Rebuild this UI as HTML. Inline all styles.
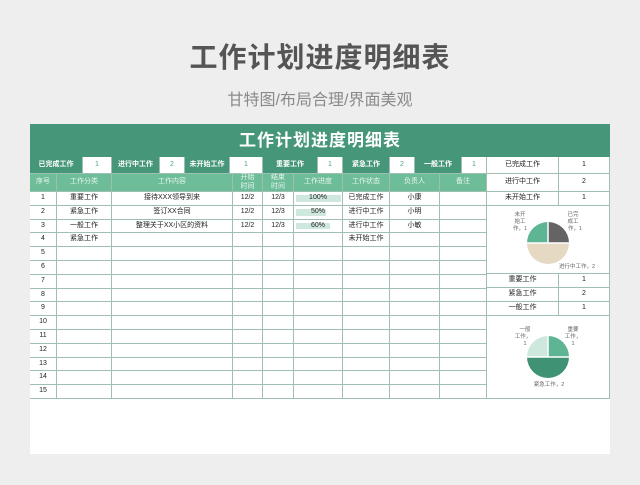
<!DOCTYPE html>
<html><head><meta charset="utf-8"><style>
*{margin:0;padding:0;box-sizing:border-box}
body{width:640px;height:485px;background:#eeeeee;font-family:"Liberation Sans","Noto Sans CJK SC",sans-serif;position:relative;overflow:hidden}
.a{position:absolute}
.h1{left:0;width:640px;top:36px;text-align:center;font-size:28px;color:#555;font-weight:bold;letter-spacing:1px}
.h2{left:0;width:640px;top:86px;text-align:center;font-size:16px;color:#8a8a8a}
.sheet{left:30px;top:124px;width:580px;height:330px;background:#fff}
.bar{left:30px;top:124px;width:580px;height:33px;background:#46977a;color:#fff;font-size:17px;font-weight:bold;text-align:center;line-height:33px;letter-spacing:1px}
.c{position:absolute;font-size:7px;text-align:center;color:#222;border-right:1px solid #9fbfb2;border-bottom:1px solid #9fbfb2;display:flex;align-items:center;justify-content:center;line-height:1.2}
.d{background:#46977a;color:#fff;font-weight:bold}
.v{color:#4fa385}
.l{background:#6dbd98;color:#e8f5ef}
.pb{position:absolute;left:2px;top:3px;bottom:3px;background:#cfe8de}
</style></head><body>
<div class="a h1">工作计划进度明细表</div>
<div class="a h2">甘特图/布局合理/界面美观</div>
<div class="a sheet"></div>
<div class="a bar">工作计划进度明细表</div>
<div id="g"></div>
<svg class="a" style="left:487px;top:206px" width="123" height="68">
<path d="M61,16 A21,21 0 0,1 82,37 L61,37Z" fill="#646464"/>
<path d="M40,37 A21,21 0 0,1 61,16 L61,37Z" fill="#5db593"/>
<path d="M40,37 A21,21 0 0,0 82,37Z" fill="#e6d9c4"/>
<line x1="40" y1="37" x2="82" y2="37" stroke="#fff" stroke-width="1.5"/>
<line x1="61" y1="16" x2="61" y2="37" stroke="#fff" stroke-width="1.5"/>
<text x="33" y="10" font-size="5.5" fill="#666" text-anchor="middle">未开</text>
<text x="33" y="17" font-size="5.5" fill="#666" text-anchor="middle">始工</text>
<text x="33" y="24" font-size="5.5" fill="#666" text-anchor="middle">作，1</text>
<text x="86" y="10" font-size="5.5" fill="#666" text-anchor="middle">已完</text>
<text x="86" y="17" font-size="5.5" fill="#666" text-anchor="middle">成工</text>
<text x="88" y="24" font-size="5.5" fill="#666" text-anchor="middle">作，1</text>
<text x="90" y="62" font-size="5.5" fill="#666" text-anchor="middle">进行中工作，2</text>
</svg>
<svg class="a" style="left:487px;top:316px" width="123" height="83">
<path d="M61,20 A21,21 0 0,1 82,41 L61,41Z" fill="#5db593"/>
<path d="M40,41 A21,21 0 0,1 61,20 L61,41Z" fill="#cfe8de"/>
<path d="M40,41 A21,21 0 0,0 82,41Z" fill="#3f9274"/>
<line x1="40" y1="41" x2="82" y2="41" stroke="#fff" stroke-width="1.5"/>
<line x1="61" y1="20" x2="61" y2="41" stroke="#fff" stroke-width="1.5"/>
<text x="38" y="15" font-size="5.5" fill="#666" text-anchor="middle">一般</text>
<text x="36" y="22" font-size="5.5" fill="#666" text-anchor="middle">工作，</text>
<text x="38" y="29" font-size="5.5" fill="#666" text-anchor="middle">1</text>
<text x="86" y="15" font-size="5.5" fill="#666" text-anchor="middle">重要</text>
<text x="86" y="22" font-size="5.5" fill="#666" text-anchor="middle">工作，</text>
<text x="86" y="29" font-size="5.5" fill="#666" text-anchor="middle">1</text>
<text x="62" y="70" font-size="5.5" fill="#666" text-anchor="middle">紧急工作，2</text>
</svg>
<script>
var g=document.getElementById('g'),h='';
function c(x1,y1,x2,y2,t,cl,extra){h+='<div class="c '+(cl||'')+'" style="left:'+x1+'px;top:'+y1+'px;width:'+(x2-x1)+'px;height:'+(y2-y1)+'px">'+(extra||'')+'<span style="position:relative">'+t+'</span></div>';}
var s=[[30,83,'已完成工作','d'],[83,112,'1','v'],[112,160,'进行中工作','d'],[160,185,'2','v'],[185,230,'未开始工作','d'],[230,263,'1','v'],[263,318,'重要工作','d'],[318,343,'1','v'],[343,390,'紧急工作','d'],[390,415,'2','v'],[415,462,'一般工作','d'],[462,487,'1','v']];
s.forEach(function(a){c(a[0],157,a[1],174,a[2],a[3]);});
var cols=[30,57,112,233,263,294,343,390,440,487];
var hd=['序号','工作分类','工作内容','开始<br>时间','结束<br>时间','工作进度','工作状态','负责人','备注'];
for(var i=0;i<9;i++)c(cols[i],174,cols[i+1],192,hd[i],'l');
var data=[['1','重要工作','接待XXX领导到来','12/2','12/3','100%','已完成工作','小康',''],['2','紧急工作','签订XX合同','12/2','12/3','50%','进行中工作','小明',''],['3','一般工作','整理关于XX小区的资料','12/2','12/3','60%','进行中工作','小敏',''],['4','紧急工作','','','','','未开始工作','','']];
var pw={'100%':45,'50%':30,'60%':34};
for(var r=0;r<15;r++){var y1=192+r*13.8,y2=192+(r+1)*13.8;var row=data[r]||[String(r+1),'','','','','','','',''];
for(var i=0;i<9;i++){var ex='';if(i==5&&row[5])ex='<div class="pb" style="width:'+pw[row[5]]+'px"></div>';
c(cols[i],Math.round(y1),cols[i+1],Math.round(y2),row[i],'',ex);}}
var R=[[157,174,'已完成工作','1'],[174,192,'进行中工作','2'],[192,206,'未开始工作','1'],[274,288,'重要工作','1'],[288,302,'紧急工作','2'],[302,316,'一般工作','1']];
R.forEach(function(a){c(487,a[0],559,a[1],a[2]);c(559,a[0],610,a[1],a[3]);});
c(487,206,610,274,'');c(487,316,610,399,'');
g.innerHTML=h;
</script>
</body></html>
